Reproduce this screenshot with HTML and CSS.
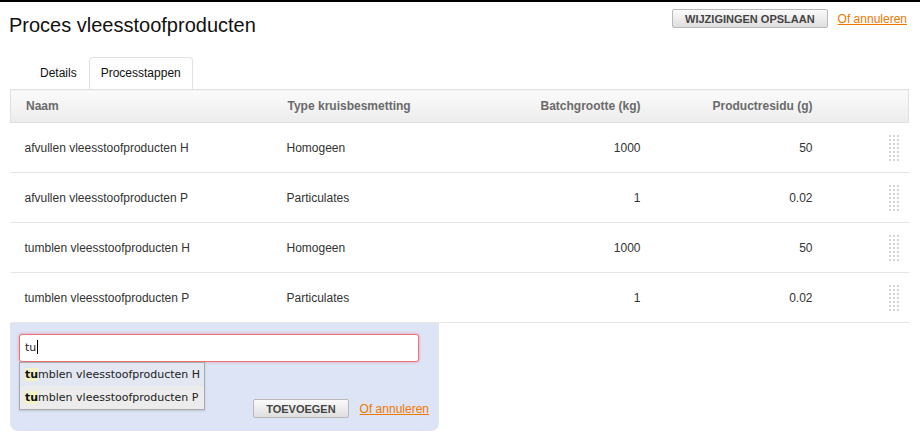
FILE: index.html
```html
<!DOCTYPE html>
<html lang="nl">
<head>
    <meta charset="UTF-8">
    <meta name="viewport" content="width=device-width, initial-scale=1.0">
    <title>Proces vleesstoofproducten</title>
    <link rel="stylesheet" href="styles.css">
</head>
<body>
    <div class="page">
        <!-- Title + save actions -->
        <div class="page-head">
            <h1 class="page-title">Proces vleesstoofproducten</h1>
            <div class="actions">
                <button class="btn" type="button">Wijzigingen opslaan</button>
                <a class="cancel-link" href="#">Of annuleren</a>
            </div>
        </div>

        <!-- Tabs -->
        <ul class="tabs">
            <li class="tab">Details</li>
            <li class="tab active">Processtappen</li>
        </ul>

        <!-- Process steps -->
        <table class="steps">
            <colgroup>
                <col class="col-name">
                <col class="col-type">
                <col class="col-batch">
                <col class="col-residu">
                <col class="col-handle">
            </colgroup>
            <thead>
                <tr>
                    <th>Naam</th>
                    <th>Type kruisbesmetting</th>
                    <th class="num">Batchgrootte (kg)</th>
                    <th class="num">Productresidu (g)</th>
                    <th></th>
                </tr>
            </thead>
            <tbody>
                <tr>
                    <td>afvullen vleesstoofproducten H</td>
                    <td>Homogeen</td>
                    <td class="num">1000</td>
                    <td class="num">50</td>
                    <td class="handle-cell"><span class="drag-handle"></span></td>
                </tr>
                <tr>
                    <td>afvullen vleesstoofproducten P</td>
                    <td>Particulates</td>
                    <td class="num">1</td>
                    <td class="num">0.02</td>
                    <td class="handle-cell"><span class="drag-handle"></span></td>
                </tr>
                <tr>
                    <td>tumblen vleesstoofproducten H</td>
                    <td>Homogeen</td>
                    <td class="num">1000</td>
                    <td class="num">50</td>
                    <td class="handle-cell"><span class="drag-handle"></span></td>
                </tr>
                <tr>
                    <td>tumblen vleesstoofproducten P</td>
                    <td>Particulates</td>
                    <td class="num">1</td>
                    <td class="num">0.02</td>
                    <td class="handle-cell"><span class="drag-handle"></span></td>
                </tr>
            </tbody>
        </table>

        <!-- Add a step -->
        <div class="add-panel">
            <div class="search">
                <div class="search-input">tu<span class="caret"></span></div>
                <ul class="suggestions">
                    <li class="suggestion first"><mark>tu</mark>mblen vleesstoofproducten H</li>
                    <li class="suggestion"><mark>tu</mark>mblen vleesstoofproducten P</li>
                </ul>
            </div>
            <div class="add-actions">
                <button class="btn" type="button">Toevoegen</button>
                <a class="cancel-link" href="#">Of annuleren</a>
            </div>
        </div>
    </div>
</body>
</html>
```

FILE: styles.css
```css
* {
    margin: 0;
    padding: 0;
    box-sizing: border-box;
}

body {
    font-family: "Liberation Sans", Arial, sans-serif;
    font-size: 12px;
    color: #333;
    background: #fff;
    border-top: 2px solid #000;
}

.page {
    padding: 0 12px 0 10px;
}

/* Header */
.page-head {
    display: flex;
    justify-content: space-between;
    align-items: flex-start;
    padding-top: 7px;
}

.page-title {
    font-size: 20px;
    font-weight: normal;
    line-height: 24px;
    color: #111;
    margin: 4px 0 0 -1px;
}

.actions {
    display: flex;
    align-items: center;
    gap: 10px;
    margin-right: 1px;
}

.btn {
    height: 19px;
    padding: 0 12px;
    font-family: "Liberation Sans", Arial, sans-serif;
    font-size: 11px;
    font-weight: bold;
    text-transform: uppercase;
    color: #444;
    background: linear-gradient(#fbfbfb, #dedede);
    border: 1px solid #b9b9b9;
    border-radius: 2px;
    cursor: pointer;
}

.cancel-link {
    font-size: 12px;
    color: #f07800;
    text-decoration: underline;
}

/* Tabs */
.tabs {
    list-style: none;
    display: flex;
    margin: 20px 0 0 18px;
}

.tab {
    height: 32px;
    line-height: 31px;
    padding: 0 11px;
    font-size: 12px;
    color: #111;
    border: 1px solid transparent;
    border-bottom: none;
    border-radius: 4px 4px 0 0;
}

.tab.active {
    background: #fff;
    border-color: #e2e2e2;
}

/* Steps table */
.steps {
    width: 898px;
    border-collapse: collapse;
    table-layout: fixed;
}

.col-name { width: 262px; }
.col-type { width: 200px; }
.col-batch { width: 182px; }
.col-residu { width: 172px; }
.col-handle { width: 82px; }

.steps th {
    height: 33px;
    padding: 0 14px 0 15px;
    text-align: left;
    font-size: 12px;
    font-weight: bold;
    color: #6a6a6a;
    background: linear-gradient(#fbfbfb, #ececec);
    border-top: 1px solid #e0e0e0;
    border-bottom: 1px solid #e0e0e0;
}

.steps th:first-child { border-left: 1px solid #e0e0e0; }
.steps th:last-child { border-right: 1px solid #e0e0e0; }

.steps td {
    height: 50px;
    padding: 0 14px;
    font-size: 12px;
    color: #333;
    border-bottom: 1px solid #e6e6e6;
    vertical-align: middle;
}

.steps .num {
    text-align: right;
    padding-right: 14px;
}

.steps th.num {
    padding-right: 14px;
}

.handle-cell {
    text-align: right;
    padding-right: 10px !important;
}

/* grey dot grid: white rows laid over grey columns */
.drag-handle {
    display: inline-block;
    width: 10px;
    height: 26px;
    vertical-align: middle;
    background:
        repeating-linear-gradient(to bottom, transparent 0 2px, #fff 2px 4px),
        repeating-linear-gradient(to right, #d4d4d4 0 2px, transparent 2px 4px);
}

/* Add panel */
.add-panel {
    width: 429px;
    background: #dce4f5;
    border-radius: 0 0 8px 8px;
    padding: 11px 10px 13px 9px;
}

.search {
    position: relative;
}

.search-input {
    width: 400px;
    height: 28px;
    padding: 0 5px;
    line-height: 26px;
    font-family: "DejaVu Sans", Verdana, sans-serif;
    font-size: 11px;
    color: #222;
    background: #fff;
    border: 1px solid #f07272;
    border-radius: 3px;
    box-shadow: 0 0 3px rgba(240, 80, 80, 0.55);
}

.caret {
    display: inline-block;
    width: 1px;
    height: 14px;
    margin-left: 1px;
    vertical-align: -3px;
    background: #000;
}

.suggestions {
    position: absolute;
    top: 28px;
    left: 0;
    width: 186px;
    list-style: none;
    background: #ececec;
    border: 1px solid #aaa;
    box-shadow: 0 1px 2px rgba(0, 0, 0, 0.15);
    z-index: 2;
}

.suggestion {
    height: 23px;
    line-height: 23px;
    padding: 0 5px;
    font-family: "DejaVu Sans", Verdana, sans-serif;
    font-size: 11px;
    color: #222;
    white-space: nowrap;
}

.suggestion.first {
    background: #e2e7f2;
}

.suggestion mark {
    background: #f2f2c6;
    color: #111;
    font-weight: bold;
}

.add-actions {
    display: flex;
    justify-content: flex-end;
    align-items: center;
    gap: 11px;
    margin-top: 37px;
}
```
